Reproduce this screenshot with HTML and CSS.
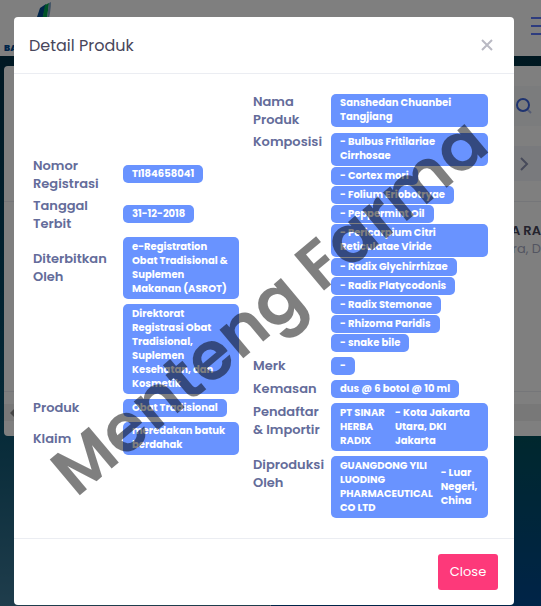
FILE: index.html
```html
<!DOCTYPE html>
<html lang="id">
<head>
  <meta charset="UTF-8" />
  <meta name="viewport" content="width=device-width, initial-scale=1.0"/>
  <title>Detail Produk</title>
  <link rel="stylesheet" href="styles.css">
</head>
<body>

  <header class="topbar">
    <div class="brand">
      <svg width="34" height="40" viewBox="0 0 34 40" aria-hidden="true">
        <path d="M2 24 L8 6 L14 2 L9 24 Z" fill="#004a94"/>
        <path d="M9 24 L13 3 L17 1 L14 24 Z" fill="#00a850"/>
        <path d="M14 24 L17 1 L19 0 Q19 10 15 24 Z" fill="#7fa4ca"/>
      </svg>
      <span class="brand-name">BA</span>
    </div>
    <button class="menu-btn" aria-label="Menu">
      <span></span><span></span><span></span>
    </button>
  </header>

  <main class="page">
    <div class="card">
      <div class="toolbar">
        <button class="tool search" aria-label="Cari">
          <svg width="18" height="18" viewBox="0 0 18 18" fill="none" stroke-width="2">
            <path d="M12 12 L16 16" stroke="#a9b8e8"/>
            <circle cx="8" cy="8" r="6" stroke="#3d66e0"/>
          </svg>
        </button>
        <button class="tool next" aria-label="Berikutnya">
          <svg width="10" height="16" viewBox="0 0 10 16" fill="none" stroke="#8e94b4" stroke-width="2">
            <path d="M2 2 L8 8 L2 14"/>
          </svg>
        </button>
      </div>
      <div class="result">
        <strong>A RA</strong>
        <span>ara, D</span>
      </div>
      <div class="scrollbar"><span></span></div>
    </div>
  </main>

  <div class="overlay">
    <div class="modal" role="dialog" aria-labelledby="modalTitle">
      <div class="modal-header">
        <h5 id="modalTitle">Detail Produk</h5>
        <button class="close-x" aria-label="Tutup">
          <svg width="12" height="12" viewBox="0 0 12 12" fill="none" stroke="#b9b9c3" stroke-width="2">
            <path d="M1 1 L11 11 M11 1 L1 11"/>
          </svg>
        </button>
      </div>

      <div class="modal-body">
        <table class="detail left">
          <tr>
            <th>Nomor Registrasi</th>
            <td><span class="pill">TI184658041</span></td>
          </tr>
          <tr>
            <th>Tanggal<br>Terbit</th>
            <td><span class="pill">31-12-2018</span></td>
          </tr>
          <tr>
            <th>Diterbitkan Oleh</th>
            <td><span class="pill tall">e-Registration<br>Obat Tradisional &amp;<br>Suplemen<br>Makanan (ASROT)</span></td>
          </tr>
          <tr>
            <th></th>
            <td><span class="pill tall">Direktorat<br>Registrasi Obat<br>Tradisional,<br>Suplemen<br>Kesehatan, dan<br>Kosmetik</span></td>
          </tr>
          <tr>
            <th>Produk</th>
            <td><span class="pill">Obat Tradisional</span></td>
          </tr>
          <tr>
            <th>Klaim</th>
            <td><span class="pill wide">meredakan batuk<br>berdahak</span></td>
          </tr>
        </table>

        <table class="detail right">
          <tr>
            <th>Nama<br>Produk</th>
            <td><span class="pill wide">Sanshedan Chuanbei<br>Tangjiang</span></td>
          </tr>
          <tr>
            <th>Komposisi</th>
            <td>
              <div class="pills">
                <span class="pill wide">- Bulbus Fritilariae<br>Cirrhosae</span>
                <span class="pill">- Cortex mori</span>
                <span class="pill">- Folium Eriobotryae</span>
                <span class="pill">- Peppermint Oil</span>
                <span class="pill wide">- Pericarpium Citri<br>Reticulatae Viride</span>
                <span class="pill">- Radix Glychirrhizae</span>
                <span class="pill">- Radix Platycodonis</span>
                <span class="pill">- Radix Stemonae</span>
                <span class="pill">- Rhizoma Paridis</span>
                <span class="pill">- snake bile</span>
              </div>
            </td>
          </tr>
          <tr>
            <th>Merk</th>
            <td><span class="pill">-</span></td>
          </tr>
          <tr>
            <th>Kemasan</th>
            <td><span class="pill">dus @ 6 botol @ 10 ml</span></td>
          </tr>
          <tr>
            <th>Pendaftar<br>&amp; Importir</th>
            <td>
              <div class="pill tall company">
                <span>PT SINAR<br>HERBA<br>RADIX</span>
                <span>- Kota Jakarta<br>Utara, DKI<br>Jakarta</span>
              </div>
            </td>
          </tr>
          <tr>
            <th>Diproduksi<br>Oleh</th>
            <td>
              <div class="pill tall company">
                <span>GUANGDONG YILI<br>LUODING<br>PHARMACEUTICAL<br>CO LTD</span>
                <span>- Luar<br>Negeri,<br>China</span>
              </div>
            </td>
          </tr>
        </table>

        <div class="watermark">Menteng Farma</div>
      </div>

      <div class="modal-footer">
        <button class="btn-close">Close</button>
      </div>
    </div>
  </div>

</body>
</html>
```
FILE: styles.css
```css
* {
  box-sizing: border-box;
}

body {
  margin: 0;
  min-height: 100vh;
  overflow: hidden;
  font-family: Poppins, Inter, "Open Sans", sans-serif;
  font-size: 13px;
  color: #646c9a;
  background:
    linear-gradient(#002c40, #00405c 40%, #0c5470 70%, #3e7a98) left / 50% 100% no-repeat,
    linear-gradient(#002c40, #005058 70%, #004890) right / 50% 100% no-repeat;
}

button {
  border: none;
  padding: 0;
  font-family: inherit;
  cursor: pointer;
}

/* page behind the dialog */
.topbar {
  display: flex;
  justify-content: space-between;
  align-items: flex-start;
  height: 56px;
  padding-left: 4px;
  background: #fff;
  overflow: hidden;
}

.brand {
  display: flex;
  flex-direction: column;
}

.brand svg {
  margin: 2px 0 0 28px;
}

.brand-name {
  font-size: 9px;
  line-height: 12px;
  font-weight: 900;
  color: #004a94;
}

.menu-btn {
  display: flex;
  flex-direction: column;
  gap: 6px;
  width: 10px;
  padding-top: 17px;
  background: none;
}

.menu-btn span {
  width: 20px;
  height: 2px;
  background: #5d78ff;
}

.page {
  padding: 10px 0 0 4px;
}

.card {
  background: #fff;
  border-radius: 4px 0 0 4px;
  padding-bottom: 15px;
}

.toolbar {
  display: flex;
  flex-direction: column;
  align-items: flex-end;
  gap: 20px;
  padding: 20px 0;
  border-bottom: 1px solid #ebedf2;
}

.tool {
  display: flex;
  align-items: center;
  width: 46px;
  height: 40px;
  padding-left: 20px;
  background: #f7f8fa;
}

.tool.next {
  height: 35px;
  padding-left: 24px;
  background: #f3f5fa;
}

.result {
  display: flex;
  flex-direction: column;
  align-items: flex-end;
  height: 190px;
  padding-top: 20px;
  white-space: nowrap;
  line-height: 18px;
  border-bottom: 1px solid #ebedf2;
}

.result strong {
  color: #48465b;
  font-weight: 600;
}

.result span {
  color: #a7abc3;
}

.scrollbar {
  display: flex;
  align-items: center;
  height: 17px;
  margin-top: 12px;
  padding-left: 6px;
  background: #f1f1f1;
}

.scrollbar span {
  border: 4px solid transparent;
  border-left-width: 0;
  border-right-color: #8a8a8a;
}

/* dialog */
.overlay {
  position: absolute;
  inset: 0;
  padding: 17px 27px 1px 14px;
  background: rgba(0, 0, 0, 0.5);
}

.modal {
  background: #fff;
  border-radius: 4px;
}

.modal-header {
  display: flex;
  justify-content: space-between;
  align-items: center;
  height: 57px;
  padding: 0 21px 0 15px;
  border-bottom: 1px solid #ebedf2;
}

.modal-header h5 {
  margin: 0;
  font-size: 16px;
  font-weight: 400;
  color: #48465b;
}

.close-x {
  display: flex;
  background: none;
}

.modal-body {
  position: relative;
  display: grid;
  grid-template-columns: 214fr 243fr;
  align-items: center;
  gap: 6px;
  padding: 17px 22px 17px 15px;
}

.detail {
  width: 100%;
  border-collapse: collapse;
  table-layout: fixed;
}

.detail th {
  width: 90px;
  padding: 2px 4px;
  text-align: left;
  font-weight: 600;
  line-height: 18px;
}

.detail.right th {
  width: 78px;
  padding-right: 0;
  vertical-align: top;
}

.detail td {
  padding: 2px 4px 3px;
}

.pill {
  display: block;
  width: fit-content;
  padding: 2px 9px;
  border-radius: 5px;
  background: #6993ff;
  color: #fff;
  font-size: 10px;
  font-weight: 700;
  line-height: 14px;
  white-space: nowrap;
}

.pill.wide,
.pill.tall {
  width: 100%;
}

.pill.wide {
  padding-bottom: 3px;
}

.pill.tall {
  padding: 3px 9px;
}

.pills {
  display: flex;
  flex-direction: column;
  gap: 1px;
}

.company {
  display: flex;
  align-items: center;
  gap: 8px;
}

.company span:first-child {
  min-width: 47px;
}

.watermark {
  position: absolute;
  left: 51%;
  top: 50%;
  transform: translate(-50%, -50%) rotate(-40deg);
  font-size: 67px;
  font-weight: 600;
  line-height: 1;
  white-space: nowrap;
  color: rgba(0, 0, 0, 0.5);
  pointer-events: none;
}

.modal-footer {
  display: flex;
  justify-content: flex-end;
  padding: 15px 16px;
  border-top: 1px solid #ebedf2;
}

.btn-close {
  width: 60px;
  height: 36px;
  border-radius: 3px;
  background: #fd397a;
  color: #fff;
  font-size: 13px;
}
```
